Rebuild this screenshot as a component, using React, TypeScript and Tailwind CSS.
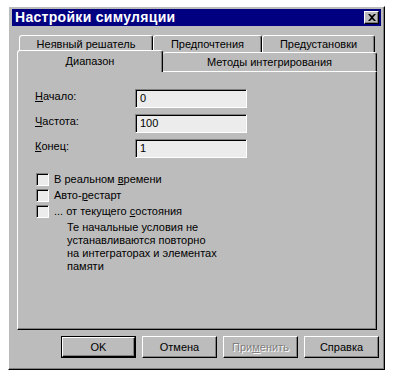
import React from "react";

const raised =
  "border border-t-white border-l-white border-r-black border-b-black shadow-[inset_-1px_-1px_0_#808080]";
const sunken =
  "border border-t-[#808080] border-l-[#808080] border-r-white border-b-white shadow-[inset_1px_1px_0_#000]";

const BackTab = ({ className, children }: { className: string; children: React.ReactNode }) => (
  <div
    className={
      "h-[19px] flex justify-center pt-[2px] border-t border-l border-r border-t-white border-l-white border-r-black rounded-t-[3px] shadow-[inset_-1px_0_0_#808080] " +
      className
    }
  >
    {children}
  </div>
);

const Field = ({ label, mn, value }: { label: string; mn: string; value: string }) => (
  <>
    <div className="h-[19px] flex items-center pb-[4px]">
      <span>
        <u>{mn}</u>
        {label}
      </span>
    </div>
    <div className={"h-[19px] w-[112px] bg-[#ececec] flex items-center pl-[4px] " + sunken}>{value}</div>
  </>
);

const Check = ({ children }: { children: React.ReactNode }) => (
  <div className="flex items-center h-[16px]">
    <div className={"w-[13px] h-[13px] bg-[#ececec] mr-[5px] " + sunken}></div>
    <span>{children}</span>
  </div>
);

const Button = ({ children, def, disabled }: { children: React.ReactNode; def?: boolean; disabled?: boolean }) => (
  <div className={"w-[75px] h-[22px] " + (def ? "border border-black" : "")}>
    <div
      className={
        "w-full h-full flex items-center justify-center " +
        raised +
        (disabled ? " text-[#808080] [text-shadow:1px_1px_0_#fff]" : "")
      }
    >
      {children}
    </div>
  </div>
);

export default function App() {
  return (
    <div className="w-[396px] h-[378px] bg-white pl-[8px] pt-[6px] text-[11px] leading-[13px] text-black [font-family:'Liberation_Sans',Arial,sans-serif]">
      <div className={"w-[377px] h-[364px] bg-[#bcbcbc] px-[3px] pt-[2px] flex flex-col " + raised}>
        {/* title bar */}
        <div className="h-[17px] bg-[#000080] flex items-center justify-between pl-[3px] pr-[2px]">
          <span className="text-white font-bold text-[14px] tracking-[0.3px]">Настройки симуляции</span>
          <div className={"w-[15px] h-[13px] bg-[#bcbcbc] flex items-center justify-center " + raised}>
            <svg width="8" height="7" viewBox="0 0 8 7">
              <path d="M0 0h2l2 2 2-2h2L5 3.5 8 7H6L4 5 2 7H0l3-3.5z" fill="#000" />
            </svg>
          </div>
        </div>

        {/* tabs */}
        <div className="ml-[5px] mt-[9px] w-[360px]">
          <div className="flex h-[17px] pl-[2px]">
            <BackTab className="w-[134px]">Неявный решатель</BackTab>
            <BackTab className="w-[109px]">Предпочтения</BackTab>
            <BackTab className="w-[113px]">Предустановки</BackTab>
          </div>
          <div className="flex h-[19px] items-end relative">
            <div className="w-[146px] h-[22px] -mb-px relative z-10 bg-[#bcbcbc] flex justify-center pt-[4px] border-t border-l border-r border-t-white border-l-white border-r-black rounded-t-[3px] shadow-[inset_-1px_0_0_#808080]">
              Диапазон
            </div>
            <div className="w-[214px] h-[19px] bg-[#bcbcbc] flex justify-center pt-[3px] border-t border-r border-t-white border-r-black rounded-t-[3px] shadow-[inset_-1px_0_0_#808080]">
              Методы интегрирования
            </div>
          </div>
          <div className={"h-[259px] pl-[17px] pt-[17px] " + raised}>
            <div className="grid grid-cols-[100px_112px] gap-y-[6px]">
              <Field mn="Н" label="ачало:" value="0" />
              <Field mn="Ч" label="астота:" value="100" />
              <Field mn="К" label="онец:" value="1" />
            </div>
            <div className="mt-[13px] ml-[1px]">
              <Check>
                В реальном <u>в</u>ремени
              </Check>
              <Check>
                Авто-<u>р</u>естарт
              </Check>
              <Check>
                ... от текущего <u>с</u>остояния
              </Check>
              <div className="pl-[31px] pt-[2px]">
                Те начальные условия не
                <br />
                устанавливаются повторно
                <br />
                на интеграторах и элементах
                <br />
                памяти
              </div>
            </div>
          </div>
        </div>

        {/* buttons */}
        <div className="flex justify-end gap-[6px] mt-[6px] pr-[2px]">
          <Button def>OK</Button>
          <Button>Отмена</Button>
          <Button disabled>
            При<u>м</u>енить
          </Button>
          <Button>Справка</Button>
        </div>
      </div>
    </div>
  );
}
